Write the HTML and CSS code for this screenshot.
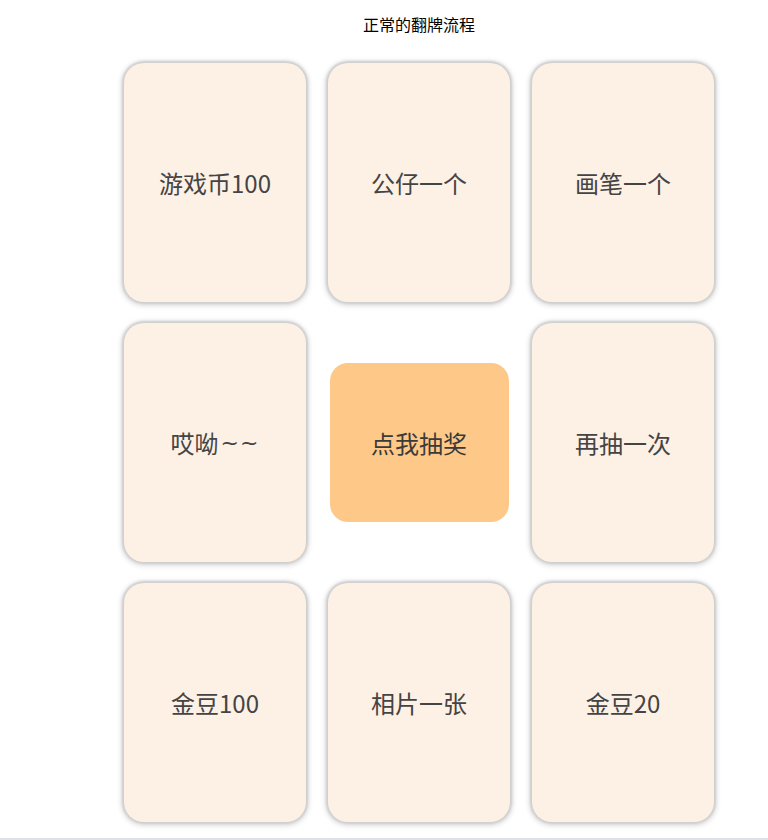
FILE: index.html
```html
<!DOCTYPE html>
<html lang="zh-CN">
<head>
<meta charset="utf-8">
<title>正常的翻牌流程</title>
<link rel="stylesheet" href="styles.css">
</head>
<body>
<div class="page">
  <h1 class="title">正常的翻牌流程</h1>
  <div class="board">
    <div class="card">游戏币100</div>
    <div class="card">公仔一个</div>
    <div class="card">画笔一个</div>
    <div class="card">哎呦<span class="tilde">~~</span></div>
    <div class="cell"><button class="draw">点我抽奖</button></div>
    <div class="card">再抽一次</div>
    <div class="card">金豆100</div>
    <div class="card">相片一张</div>
    <div class="card">金豆20</div>
  </div>
</div>
<div class="bottom-bar"></div>
</body>
</html>
```
FILE: styles.css
```css
html, body {
  margin: 0;
  padding: 0;
  background: #ffffff;
  font-family: "Noto Sans CJK SC", "Noto Sans", sans-serif;
}

.page {
  width: 590px;
  margin-left: 124px;
}

.title {
  margin: 0;
  padding-top: 13px;
  height: 63px;
  box-sizing: border-box;
  font-size: 16px;
  line-height: 22px;
  font-weight: normal;
  color: #000;
  text-align: center;
}

.board {
  display: grid;
  grid-template-columns: repeat(3, 182px);
  grid-auto-rows: 239px;
  column-gap: 22px;
  row-gap: 21px;
}

.card {
  display: flex;
  align-items: center;
  justify-content: center;
  background: #fdf0e5;
  border-radius: 20px;
  box-shadow: 0 0 2px 2px #cfcfcf, 0 1px 5px 3px rgba(0, 0, 0, 0.13);
  font-size: 24px;
  color: #444;
}

.tilde {
  font-family: "DejaVu Sans", sans-serif;
  font-size: 22px;
  letter-spacing: 1px;
  margin-left: 2px;
}

.cell {
  display: flex;
  align-items: center;
  justify-content: center;
}

.draw {
  width: 179px;
  height: 159px;
  border: none;
  border-radius: 18px;
  background: #fec988;
  font-family: inherit;
  font-size: 24px;
  color: #3a3a3a;
  padding: 0;
  cursor: pointer;
}

.bottom-bar {
  margin-top: 16px;
  height: 3px;
  background: #dee2e6;
}
```
